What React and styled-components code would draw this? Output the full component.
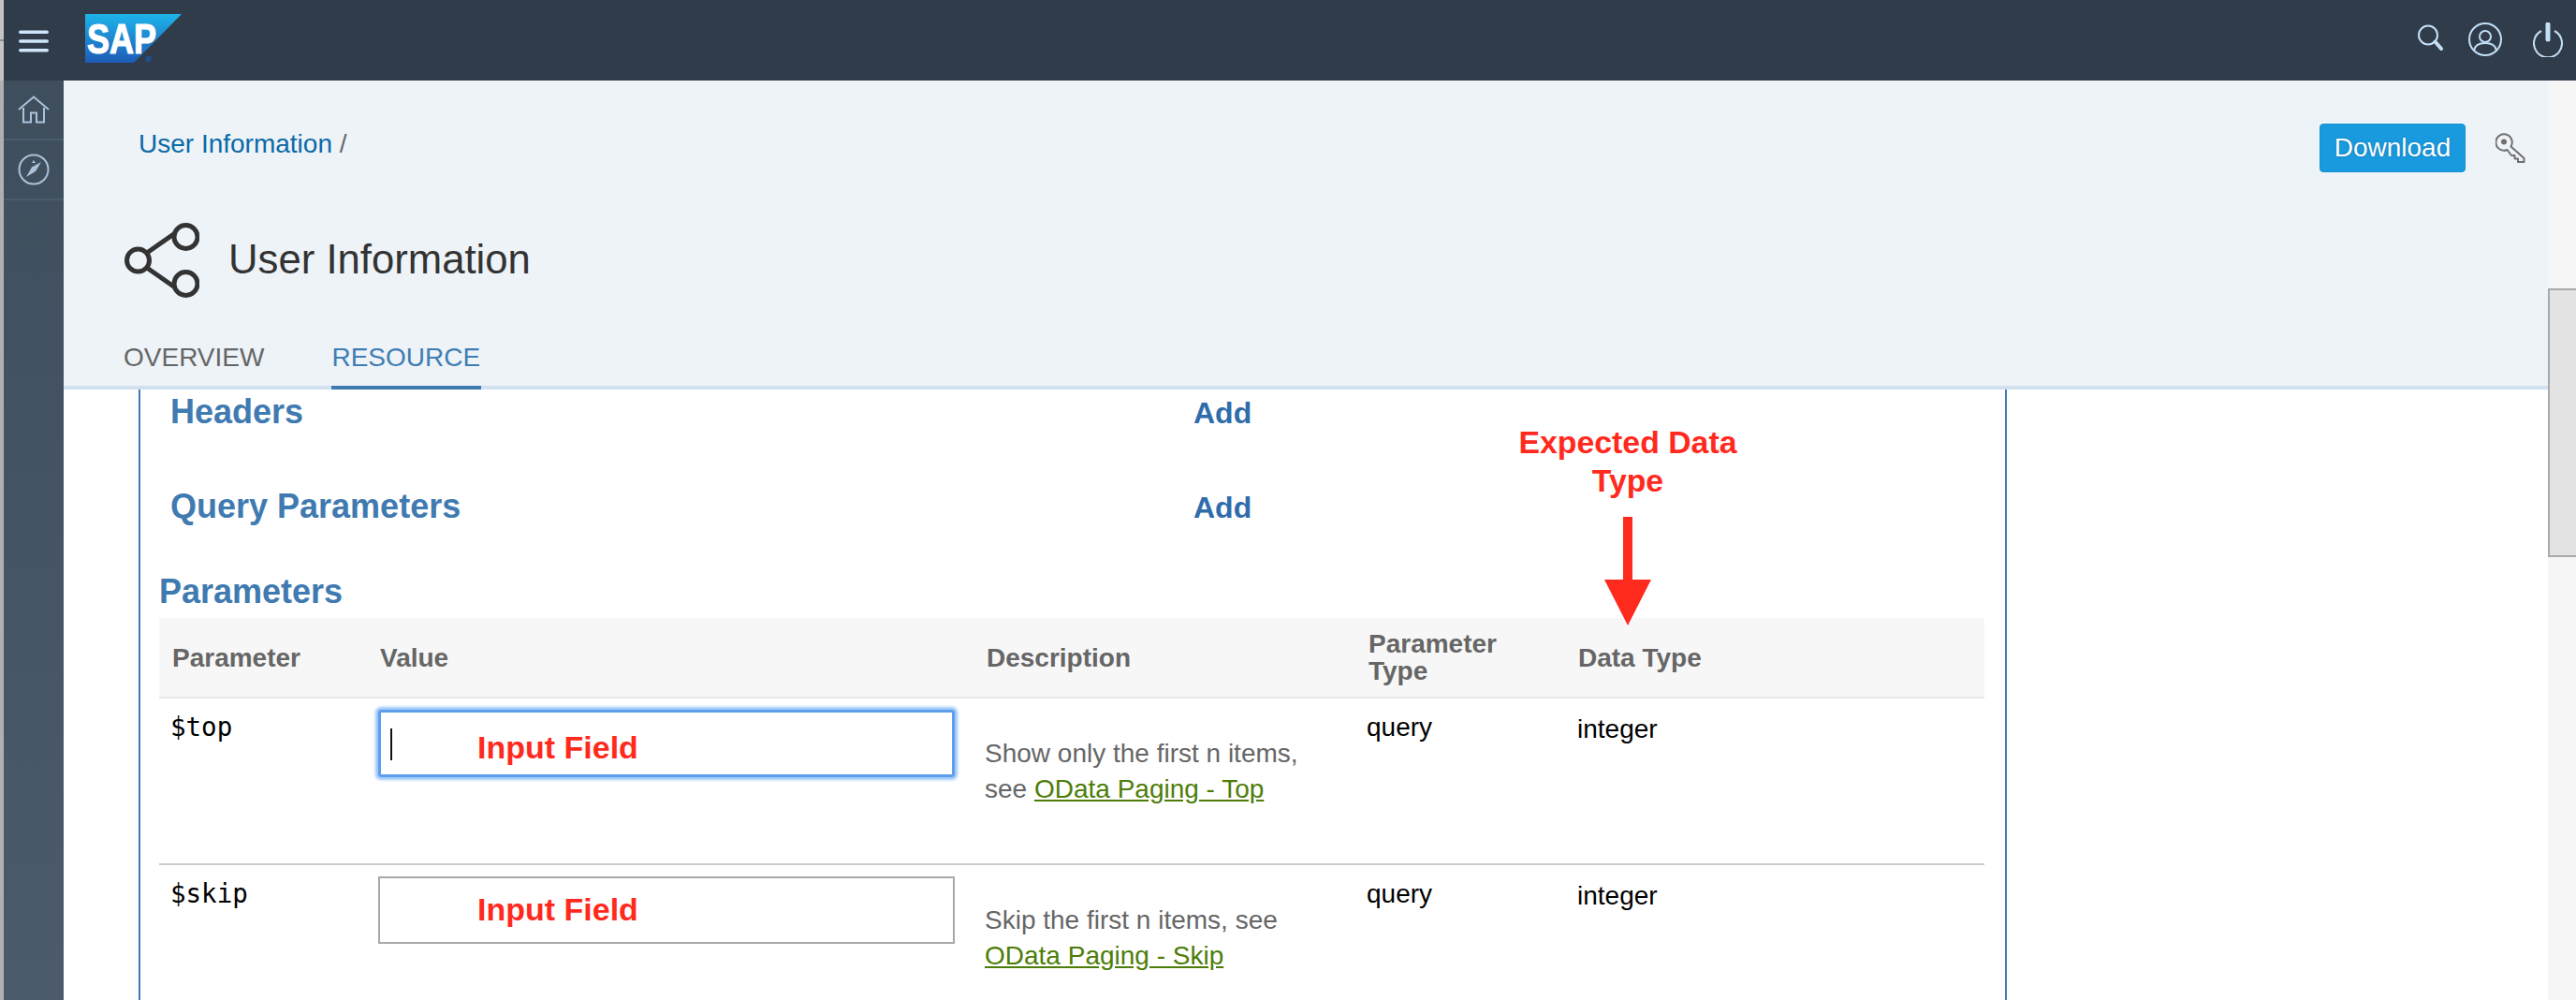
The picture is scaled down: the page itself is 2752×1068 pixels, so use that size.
import styled, { createGlobalStyle } from "styled-components";

const GlobalStyle = createGlobalStyle`
  html, body {
    margin: 0;
    height: 100%;
    overflow: hidden;
    background: #fff;
    font-family: "Liberation Sans", Arial, sans-serif;
  }
`;

const Page = styled.div`
  display: flex;
  height: 1068px;
  overflow: hidden;
`;

const LeftEdge = styled.div`
  width: 4px;
  flex: none;
  background: linear-gradient(
    #c4c4c4 42px,
    #909090 42px,
    #909090 44px,
    #c4c4c4 44px,
    #c4c4c4 86px,
    #b0b0b0 86px
  );
`;

const Shell = styled.div`
  flex: 1;
  min-width: 0;
  display: flex;
  flex-direction: column;
`;

const TopBar = styled.header`
  height: 86px;
  flex: none;
  display: flex;
  align-items: flex-start;
  padding: 0 14px 0 16px;
  background: #303c49;
`;

const BarIcon = styled.svg`
  display: block;
  flex: none;
  margin-top: ${(p) => p.$top}px;
  margin-left: ${(p) => p.$left || 0}px;
`;

const Spacer = styled.div`
  flex: 1;
`;

const Body = styled.div`
  flex: 1;
  min-height: 0;
  display: flex;
`;

const SideNav = styled.nav`
  width: 64px;
  flex: none;
  background: linear-gradient(#3f4e5d, #4b5b6c);
`;

const SideItem = styled.div`
  height: 62px;
  display: flex;
  align-items: center;
  justify-content: center;
  border-bottom: 2px solid #4b5c6c;
`;

const Main = styled.main`
  flex: 1;
  min-width: 0;
  display: flex;
  flex-direction: column;
`;

const PageHeader = styled.div`
  flex: none;
  padding: 46px 24px 0 65px;
  background: #eef3f8;
  border-bottom: 4px solid #d1e1ef;
`;

const HeaderTop = styled.div`
  display: flex;
  align-items: flex-start;
  gap: 32px;
`;

const Breadcrumb = styled.div`
  flex: 1;
  margin: 6px 0 0 15px;
  font-size: 28px;
  line-height: 32px;
  color: #666;
`;

const CrumbLink = styled.a`
  color: #0a6aa6;
`;

const DownloadButton = styled.button`
  width: 156px;
  height: 52px;
  padding: 0;
  box-sizing: border-box;
  border: 1px solid #1590d0;
  border-radius: 4px;
  background: #199ade;
  color: #fff;
  font: 28px "Liberation Sans", Arial, sans-serif;
  text-shadow: 0 0 2px rgba(0, 60, 110, 0.5);
`;

const KeyIcon = styled.svg`
  display: block;
  margin-top: 10px;
`;

const TitleRow = styled.div`
  display: flex;
  align-items: center;
  gap: 31px;
  margin-top: 54px;
`;

const Title = styled.h1`
  margin: -2px 0 0;
  font-size: 43.7px;
  line-height: 50px;
  font-weight: 400;
  color: #333;
`;

const Tabs = styled.div`
  display: flex;
  gap: 71px;
  margin: 48px 0 -4px -1px;
`;

const Tab = styled.div`
  padding: 0 1px 14px 0;
  font-size: 28px;
  line-height: 32px;
  color: ${(p) => (p.$active ? "#3f7db3" : "#666")};
  border-bottom: 4px solid ${(p) => (p.$active ? "#3f7ab0" : "transparent")};
`;

const Content = styled.div`
  flex: 1;
  min-height: 0;
  overflow: hidden;
  padding: 0 578px 0 80px;
`;

const Panel = styled.section`
  position: relative;
  height: 100%;
  box-sizing: border-box;
  padding-top: 4px;
  border: solid #3f7ab5;
  border-width: 0 2px;
`;

const SectionRow = styled.div`
  display: flex;
  align-items: baseline;
  padding-left: 32px;
  margin-bottom: ${(p) => p.$gap}px;
`;

const SectionTitle = styled.h2`
  margin: 0;
  font-size: 36px;
  line-height: 40px;
  font-weight: 700;
  color: #3f7ab0;
`;

const RowTitle = styled(SectionTitle)`
  width: 1093px;
`;

const ParamsTitle = styled(SectionTitle)`
  margin: 0 0 8px 20px;
`;

const AddLink = styled.a`
  font-size: 32px;
  font-weight: 700;
  color: #2f6cab;
`;

const Table = styled.div`
  margin: 0 22px 0 20px;
`;

const HeadRow = styled.div`
  display: grid;
  grid-template-columns: 222px 648px 408px 224px 1fr;
  align-items: center;
  height: 84px;
  padding-left: 14px;
  background: #f7f7f7;
  border-bottom: 2px solid #e6e6e6;
`;

const HeadCell = styled.div`
  font-size: 28px;
  line-height: 29px;
  font-weight: 700;
  color: #666;
`;

const BodyRow = styled.div`
  display: grid;
  grid-template-columns: 222px 648px 408px 225px 1fr;
  align-items: start;
  height: 176px;
  padding-left: 12px;
  border-bottom: 2px solid #ccc;
`;

const ParamName = styled.div`
  margin-top: 14px;
  font-family: "DejaVu Sans Mono", monospace;
  font-size: 27.5px;
  line-height: 32px;
  color: #000;
`;

const InputBox = styled.div`
  position: relative;
  width: 616px;
  height: 72px;
  box-sizing: border-box;
  margin-top: 12px;
  padding: ${(p) => (p.$focused ? "18px 0 0 103px" : "14px 0 0 104px")};
  border: ${(p) => (p.$focused ? "3px solid #5c9fec" : "2px solid #a8a8a8")};
  border-radius: ${(p) => (p.$focused ? "3px" : "0")};
  box-shadow: ${(p) => (p.$focused ? "0 0 3px 3px #9cc6f8" : "none")};
`;

const Caret = styled.span`
  position: absolute;
  left: 10px;
  top: 17px;
  width: 2px;
  height: 34px;
  background: #111;
`;

const Note = styled.div`
  font-size: 34px;
  line-height: 38px;
  font-weight: 700;
  color: #ff2a1e;
`;

const Description = styled.div`
  max-width: 360px;
  margin-top: 40px;
  font-size: 28px;
  line-height: 38px;
  color: #666;
`;

const DocLink = styled.a`
  color: #4d7d08;
  text-decoration: underline;
`;

const PlainCell = styled.div`
  margin-top: ${(p) => p.$top}px;
  font-size: 28px;
  line-height: 32px;
  color: #000;
`;

const Annotation = styled.div`
  position: absolute;
  left: 1439px;
  top: 36px;
  width: 300px;
  display: flex;
  flex-direction: column;
  align-items: center;
  text-align: center;
  font-size: 33.8px;
  line-height: 41px;
  font-weight: 700;
  color: #ff2a1e;
`;

const ArrowIcon = styled.svg`
  display: block;
  margin-top: 18px;
`;

const Scrollbar = styled.div`
  width: 30px;
  flex: none;
  background: #f6f6f6;
`;

const ScrollThumb = styled.div`
  height: 287px;
  box-sizing: border-box;
  margin-top: 222px;
  background: #e3e3e3;
  border: 2px solid #a9a9a9;
  border-right: none;
`;

const params = [
  {
    name: "$top",
    focused: true,
    text: "Show only the first n items, see ",
    link: "OData Paging - Top",
  },
  {
    name: "$skip",
    focused: false,
    text: "Skip the first n items, see ",
    link: "OData Paging - Skip",
  },
];

function App() {
  return (
    <>
      <GlobalStyle />
      <Page>
        <LeftEdge />
        <Shell>
          <TopBar>
            <BarIcon $top={32} width="32" height="24" viewBox="0 0 32 24" fill="#cfe6fc">
              <rect y="0.4" width="32" height="3.6" rx="1.8" />
              <rect y="10.2" width="32" height="3.6" rx="1.8" />
              <rect y="20" width="32" height="3.6" rx="1.8" />
            </BarIcon>
            <BarIcon $top={15} $left={39} width="103" height="52" viewBox="0 0 103 52">
              <defs>
                <linearGradient id="sapFill" x1="0" y1="0" x2="0" y2="1">
                  <stop offset="0" stopColor="#1db4ea" />
                  <stop offset="1" stopColor="#1f5bb6" />
                </linearGradient>
              </defs>
              <polygon points="0,0 103,0 52,52 0,52" fill="url(#sapFill)" />
              <text
                x="2"
                y="42"
                fontFamily="Liberation Sans"
                fontWeight="700"
                fontSize="45"
                fill="#fff"
                stroke="#fff"
                strokeWidth="1.2"
                textLength="74"
                lengthAdjust="spacingAndGlyphs"
              >
                SAP
              </text>
              <circle cx="67.5" cy="48" r="3.2" fill="#1f4f8f" />
            </BarIcon>
            <Spacer />
            <BarIcon $top={26} width="28" height="28" viewBox="0 0 28 28" fill="none" stroke="#c3dff7">
              <circle cx="12" cy="11.5" r="10" strokeWidth="2" />
              <path d="M19.5 18.5 L26 26" strokeWidth="4" strokeLinecap="round" />
            </BarIcon>
            <BarIcon $top={24} $left={27} width="36" height="36" viewBox="0 0 36 36" fill="none" stroke="#c3dff7" strokeWidth="2">
              <circle cx="18" cy="18" r="17" />
              <circle cx="18" cy="15" r="6" />
              <path d="M6 30 C7 24 12 22 18 22 C24 22 29 24 30 30" />
            </BarIcon>
            <BarIcon $top={24} $left={33} width="32" height="37" viewBox="0 0 32 37" fill="none" stroke="#c3dff7">
              <path d="M9 9 A15 15 0 1 0 23 9" strokeWidth="2" />
              <path d="M16 2 V18" strokeWidth="5" strokeLinecap="round" />
            </BarIcon>
          </TopBar>
          <Body>
            <SideNav>
              <SideItem>
                <svg width="34" height="30" viewBox="0 0 34 30" fill="none" stroke="#aac2da" strokeWidth="2">
                  <path d="M1 15 L17 1.5 L33 15" />
                  <path d="M6 13 V28.5 H14 V18.5 H20 V28.5 H28 V13" />
                </svg>
              </SideItem>
              <SideItem>
                <svg width="34" height="34" viewBox="0 0 34 34" fill="none" stroke="#aac2da" strokeWidth="2">
                  <circle cx="17" cy="17" r="15.5" />
                  <path d="M25 9 L15 14.5 L9 25 L19 19 Z" fill="#aac2da" stroke="none" />
                  <path d="M17 7 L19 10 H15 Z" fill="#aac2da" stroke="none" />
                </svg>
              </SideItem>
            </SideNav>
            <Main>
              <PageHeader>
                <HeaderTop>
                  <Breadcrumb>
                    <CrumbLink>User Information</CrumbLink> /
                  </Breadcrumb>
                  <DownloadButton>Download</DownloadButton>
                  <KeyIcon width="32" height="32" viewBox="0 0 32 32" fill="none" stroke="#6f6f6f" strokeWidth="2">
                    <path d="M16.5 14.5 L30.5 27 V31 H24 V27.5 H20.5 V24 H17 L12.5 18 A8.7 8.7 0 1 1 16.5 14.5 Z" strokeLinejoin="round" />
                    <circle cx="9" cy="9.5" r="3" fill="#6f6f6f" stroke="none" />
                  </KeyIcon>
                </HeaderTop>
                <TitleRow>
                  <svg width="80" height="80" viewBox="0 0 80 80" fill="none" stroke="#333" strokeWidth="5">
                    <path d="M24 32 L54 11 M24 48 L54 69" />
                    <circle cx="65.5" cy="15" r="12.5" />
                    <circle cx="14.5" cy="40" r="12" />
                    <circle cx="65.5" cy="65" r="12.5" />
                  </svg>
                  <Title>User Information</Title>
                </TitleRow>
                <Tabs>
                  <Tab>OVERVIEW</Tab>
                  <Tab $active>RESOURCE</Tab>
                </Tabs>
              </PageHeader>
              <Content>
                <Panel>
                  <SectionRow $gap={61}>
                    <RowTitle>Headers</RowTitle>
                    <AddLink>Add</AddLink>
                  </SectionRow>
                  <SectionRow $gap={51}>
                    <RowTitle>Query Parameters</RowTitle>
                    <AddLink>Add</AddLink>
                  </SectionRow>
                  <ParamsTitle>Parameters</ParamsTitle>
                  <Table>
                    <HeadRow>
                      <HeadCell>Parameter</HeadCell>
                      <HeadCell>Value</HeadCell>
                      <HeadCell>Description</HeadCell>
                      <HeadCell>
                        Parameter
                        <br />
                        Type
                      </HeadCell>
                      <HeadCell>Data Type</HeadCell>
                    </HeadRow>
                    {params.map((param) => (
                      <BodyRow key={param.name}>
                        <ParamName>{param.name}</ParamName>
                        <InputBox $focused={param.focused}>
                          {param.focused && <Caret />}
                          <Note>Input Field</Note>
                        </InputBox>
                        <Description>
                          {param.text}
                          <DocLink>{param.link}</DocLink>
                        </Description>
                        <PlainCell $top={15}>query</PlainCell>
                        <PlainCell $top={17}>integer</PlainCell>
                      </BodyRow>
                    ))}
                  </Table>
                  <Annotation>
                    <div>
                      Expected Data
                      <br />
                      Type
                    </div>
                    <ArrowIcon width="50" height="116" viewBox="0 0 50 116" fill="#ff2a1e">
                      <rect x="20" y="0" width="10" height="68" />
                      <polygon points="0,67 50,67 25,116" />
                    </ArrowIcon>
                  </Annotation>
                </Panel>
              </Content>
            </Main>
            <Scrollbar>
              <ScrollThumb />
            </Scrollbar>
          </Body>
        </Shell>
      </Page>
    </>
  );
}

export default App;
